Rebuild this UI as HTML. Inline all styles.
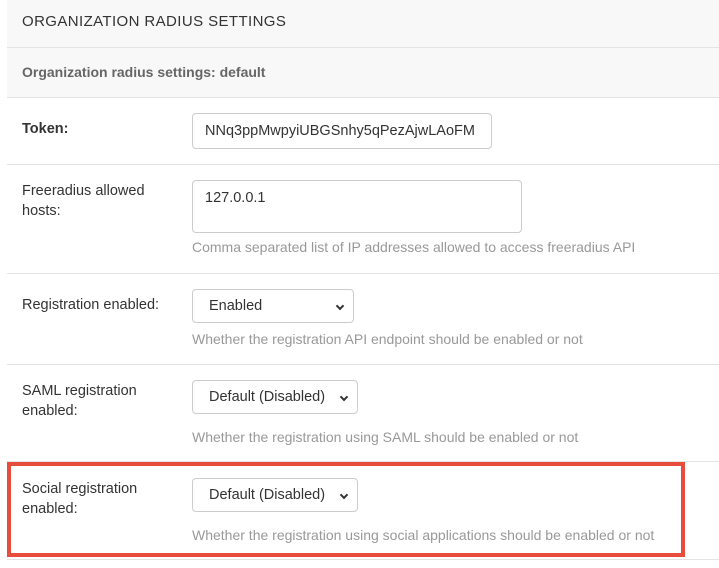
<!DOCTYPE html>
<html><head><style>
body{margin:0;width:719px;height:568px;background:#fff;font-family:"Liberation Sans",sans-serif;position:relative;overflow:hidden}
.a{position:absolute}
.line{position:absolute;left:7px;right:0;height:1px;background:#e4e4e4}
.lbl{position:absolute;left:22px;font-size:14.5px;color:#333;line-height:20px}
.help{position:absolute;left:192px;font-size:14px;color:#999}
.box{position:absolute;left:192px;border:1px solid #ccc;border-radius:4px;background:#fff;font-size:14.5px;color:#333;box-sizing:border-box}
.sel{padding-left:16px;line-height:32px;height:34px}
.sel:after{content:"";position:absolute;right:10px;top:13px;width:4px;height:4px;border-right:2px solid #333;border-bottom:2px solid #333;transform:rotate(45deg)}
</style></head><body>
<div class="a" style="left:7px;top:0;right:0;height:47px;background:#f8f8f8"></div>
<div class="a" style="left:22px;top:13px;font-size:15px;color:#333;letter-spacing:0.4px">ORGANIZATION RADIUS SETTINGS</div>
<div class="line" style="top:47px"></div>
<div class="a" style="left:7px;top:48px;right:0;height:49px;background:#f8f8f8"></div>
<div class="a" style="left:22px;top:64px;font-size:14px;font-weight:bold;color:#666">Organization radius settings: default</div>
<div class="line" style="top:97px"></div>

<div class="lbl" style="top:119px;font-weight:bold">Token:</div>
<div class="box" style="top:113px;width:300px;height:36px;padding:8px 12px;line-height:18px">NNq3ppMwpyiUBGSnhy5qPezAjwLAoFM</div>
<div class="line" style="top:164px"></div>

<div class="lbl" style="top:181px">Freeradius allowed<br>hosts:</div>
<div class="box" style="top:180px;width:330px;height:53px;padding:8px 12px;line-height:18px">127.0.0.1</div>
<div class="help" style="top:239px">Comma separated list of IP addresses allowed to access freeradius API</div>
<div class="line" style="top:273px"></div>

<div class="lbl" style="top:295px">Registration enabled:</div>
<div class="box sel" style="top:289px;width:162px">Enabled</div>
<div class="help" style="top:331px">Whether the registration API endpoint should be enabled or not</div>
<div class="line" style="top:364px"></div>

<div class="lbl" style="top:381px">SAML registration<br>enabled:</div>
<div class="box sel" style="top:380px;width:166px">Default (Disabled)</div>
<div class="help" style="top:429px">Whether the registration using SAML should be enabled or not</div>
<div class="line" style="top:461px"></div>

<div class="lbl" style="top:479px">Social registration<br>enabled:</div>
<div class="box sel" style="top:478px;width:166px">Default (Disabled)</div>
<div class="help" style="top:527px">Whether the registration using social applications should be enabled or not</div>
<div class="line" style="top:559px"></div>
<div class="a" style="left:7px;top:462px;width:678px;height:95px;border:4px solid #e74c3c;box-sizing:border-box"></div>
</body></html>
